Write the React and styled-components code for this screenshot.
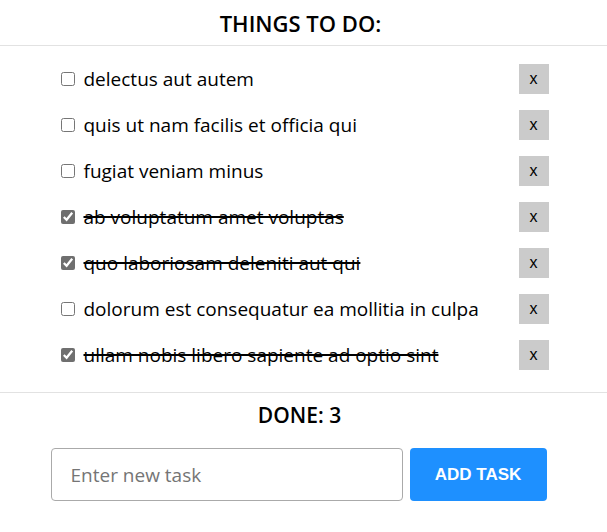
import React, { useState } from 'react'
import styled, { createGlobalStyle } from 'styled-components'

const GlobalStyle = createGlobalStyle`
    body {
        margin: 0;
        background: #fff;
        font-family: "Open Sans", "Noto Sans", sans-serif;
        color: #000;
    }
`

const Page = styled.div`
    display: flex;
    flex-direction: column;
    width: 100%;
`

const Title = styled.h1`
    margin: 0;
    height: 45px;
    display: flex;
    align-items: center;
    justify-content: center;
    font-size: 22px;
    font-weight: 600;
    padding-right: 6px;
    border-bottom: 1px solid #e2e2e2;
`

const List = styled.ul`
    list-style: none;
    margin: 0;
    padding: 18px 0 22px;
    display: flex;
    flex-direction: column;
    gap: 16px;
    border-bottom: 1px solid #e2e2e2;
`

const Item = styled.li`
    width: 488px;
    margin: 0 auto;
    padding-left: 2px;
    display: flex;
    align-items: center;
    height: 30px;
`

const Check = styled.input`
    width: 14px;
    height: 14px;
    margin: 0 9px 0 0;
    accent-color: #6f6f6f;
`

const Label = styled.span`
    flex: 1;
    font-size: 19px;
    text-decoration: ${p => (p.$done ? 'line-through' : 'none')};
    text-decoration-thickness: 2px;
`

const RemoveButton = styled.button`
    width: 30px;
    height: 30px;
    border: none;
    background: #cbcbcb;
    font-family: "Liberation Sans", Arial, sans-serif;
    font-size: 16px;
    padding: 0;
    color: #000;
`

const Done = styled.h2`
    margin: 0;
    height: 44px;
    display: flex;
    align-items: center;
    justify-content: center;
    font-size: 21px;
    font-weight: 600;
    padding-right: 8px;
`

const Form = styled.form`
    display: flex;
    justify-content: center;
    gap: 7px;
    margin-top: 11px;
    padding-right: 10px;
`

const TaskInput = styled.input`
    width: 352px;
    height: 53px;
    box-sizing: border-box;
    border: 1px solid #aaa;
    border-radius: 4px;
    padding: 0 19px;
    font-family: "Open Sans", "Noto Sans", sans-serif;
    font-size: 19px;

    &::placeholder {
        color: #757575;
    }
`

const AddButton = styled.button`
    width: 137px;
    height: 53px;
    border: none;
    border-radius: 4px;
    background: #1e90ff;
    color: #fff;
    font-family: "Liberation Sans", Arial, sans-serif;
    font-weight: 700;
    font-size: 17px;
`

const initial = [
    { id: 1, title: 'delectus aut autem', done: false },
    { id: 2, title: 'quis ut nam facilis et officia qui', done: false },
    { id: 3, title: 'fugiat veniam minus', done: false },
    { id: 4, title: 'ab voluptatum amet voluptas', done: true },
    { id: 5, title: 'quo laboriosam deleniti aut qui', done: true },
    { id: 6, title: 'dolorum est consequatur ea mollitia in culpa', done: false },
    { id: 7, title: 'ullam nobis libero sapiente ad optio sint', done: true },
]

const App = () => {
    const [todos, setTodos] = useState(initial)
    const [text, setText] = useState('')

    const toggle = id =>
        setTodos(todos.map(t => (t.id === id ? { ...t, done: !t.done } : t)))
    const remove = id => setTodos(todos.filter(t => t.id !== id))
    const add = e => {
        e.preventDefault()
        if (!text.trim()) return
        setTodos([...todos, { id: Date.now(), title: text, done: false }])
        setText('')
    }

    return (
        <Page>
            <GlobalStyle />
            <Title>THINGS TO DO:</Title>
            <List>
                {todos.map(t => (
                    <Item key={t.id}>
                        <Check type="checkbox" checked={t.done} onChange={() => toggle(t.id)} />
                        <Label $done={t.done}>{t.title}</Label>
                        <RemoveButton onClick={() => remove(t.id)}>x</RemoveButton>
                    </Item>
                ))}
            </List>
            <Done>DONE: {todos.filter(t => t.done).length}</Done>
            <Form onSubmit={add}>
                <TaskInput
                    placeholder="Enter new task"
                    value={text}
                    onChange={e => setText(e.target.value)}
                />
                <AddButton type="submit">ADD TASK</AddButton>
            </Form>
        </Page>
    )
}

export default App
